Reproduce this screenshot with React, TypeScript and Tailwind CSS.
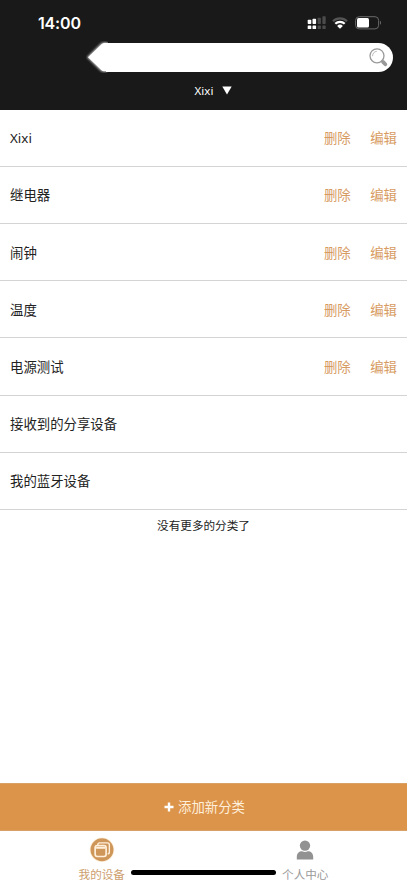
const categories = [
  { name: "Xixi", editable: true },
  { name: "继电器", editable: true },
  { name: "闹钟", editable: true },
  { name: "温度", editable: true },
  { name: "电源测试", editable: true },
  { name: "接收到的分享设备", editable: false },
  { name: "我的蓝牙设备", editable: false },
];

function SignalIcon() {
  return (
    <svg width="20" height="14" viewBox="0 0 20 14" fill="#fff">
      <rect x="0.7" y="3.8" width="3.6" height="4.2" rx="0.7" />
      <rect x="5.5" y="2.7" width="3.6" height="5.3" rx="0.7" />
      <rect x="0.7" y="9.4" width="3.6" height="3.7" rx="0.7" />
      <rect x="5.5" y="9.4" width="3.6" height="3.7" rx="0.7" />
      <g fill="#4b4b4b">
        <rect x="10.6" y="1.7" width="3.3" height="6.3" rx="0.7" />
        <rect x="15.4" y="0.2" width="3.3" height="7.8" rx="0.7" />
        <rect x="10.6" y="9.4" width="3.3" height="3.7" rx="0.7" />
        <rect x="15.4" y="9.4" width="3.3" height="3.7" rx="0.7" />
      </g>
    </svg>
  );
}

function WifiIcon() {
  return (
    <svg width="16" height="12" viewBox="0 0 16 12" fill="none" strokeWidth="2.2">
      <path d="M1 4.2a10 10 0 0 1 14 0" stroke="#555" />
      <path d="M3.3 6.8a6.7 6.7 0 0 1 9.4 0" stroke="#fff" />
      <path d="M8 11.7 5.1 8.9a4.1 4.1 0 0 1 5.8 0Z" fill="#fff" />
    </svg>
  );
}

function BatteryIcon() {
  return (
    <svg width="27" height="14" viewBox="0 0 27 14" fill="none">
      <rect x="0.6" y="0.7" width="23" height="12.2" rx="3.6" stroke="#696969" />
      <rect x="2" y="2.1" width="12" height="9.4" rx="1.6" fill="#fff" />
      <path d="M25 4.8c1.2.6 1.2 3.4 0 4Z" fill="#777" />
    </svg>
  );
}

function SearchIcon() {
  return (
    <svg width="19" height="19" viewBox="0 0 19 19" fill="none">
      <circle cx="8" cy="7.8" r="7" stroke="#999" strokeWidth="1.3" />
      <path d="M3.6 8.2a4.5 4.5 0 0 1 4.2-4.9" stroke="#aaa" strokeWidth="0.8" />
      <path d="m12.4 12.6 1.4 1.3" stroke="#999" strokeWidth="1.5" />
      <path d="m14 13.9 2.3 2.4" stroke="#999" strokeWidth="3.8" strokeLinecap="round" />
    </svg>
  );
}

function Header() {
  return (
    <header className="flex h-[109.6px] shrink-0 flex-col bg-[#191919] text-white">
      <div className="flex h-[43px] items-center justify-between pt-[3px] pr-[25.5px] pl-[38px]">
        <span className="font-['Inter'] text-[16px] font-semibold tracking-[-0.15px]">14:00</span>
        <div className="flex items-center">
          <SignalIcon />
          <span className="ml-[5px]"><WifiIcon /></span>
          <span className="ml-[6.5px]"><BatteryIcon /></span>
        </div>
      </div>
      <div className="flex h-[28.6px] pr-[14.5px] pl-[86px]">
        <svg width="22" height="32" viewBox="0 0 22 32" className="-mt-[1.7px] -mr-[2px] shrink-0">
          <defs>
            <filter id="tip-soften" x="-20%" y="-20%" width="140%" height="140%">
              <feGaussianBlur stdDeviation="0.9" />
            </filter>
          </defs>
          <path d="M0.8 16.2 14.8 2.4Q17 .9 21 1.2V30.8Q17 31.3 14.8 30Z" fill="#bbb" filter="url(#tip-soften)" />
          <path d="M2 16.2 15.8 2.9Q17 1.7 22 1.7V30.3Q17 30.3 15.8 29.4Z" fill="#fff" />
        </svg>
        <div className="flex flex-1 items-center justify-end rounded-r-full bg-white pr-[4.5px]">
          <SearchIcon />
        </div>
      </div>
      <div className="flex flex-1 items-center justify-center gap-[9px] pl-[20px]">
        <span className="font-['Noto_Sans'] text-[11.5px]">Xixi</span>
        <svg width="10" height="9" viewBox="0 0 10 9" fill="#fff"><path d="M.3 .6h9.4L5 8.5Z" /></svg>
      </div>
    </header>
  );
}

function DevicesIcon() {
  return (
    <svg width="26" height="26" viewBox="0 0 26 26" fill="none">
      <circle cx="13" cy="13" r="12.6" fill="#fdf0dc" />
      <circle cx="13" cy="13" r="11.7" fill="#cf965a" />
      <path d="M8.7 8.5V8q0-2 2-2h7.6q2.2 0 2.2 2.2v7q0 2-1.8 2" stroke="#fff0dc" strokeWidth="1.4" />
      <rect x="6" y="8.7" width="11.2" height="11.2" rx="2.2" stroke="#fff0dc" strokeWidth="1.7" />
      <path d="M7 10.9h9.4" stroke="#fff0dc" strokeWidth="2.2" />
    </svg>
  );
}

function PersonIcon() {
  return (
    <svg width="18" height="21" viewBox="0 0 18 21" fill="#929292">
      <circle cx="9" cy="5.7" r="5.3" />
      <path d="M.6 20v-2.5c0-4.1 2.5-6 5.4-6q3 1.4 6 0c2.9 0 5.4 1.9 5.4 6V20Z" />
    </svg>
  );
}

export default function App() {
  return (
    <div className="flex h-[883px] w-[407px] flex-col overflow-hidden bg-white font-['Noto_Sans','Noto_Sans_CJK_SC',sans-serif]">
      <Header />
      <main className="min-h-0 flex-1">
        <ul>
          {categories.map((category) => (
            <li
              key={category.name}
              className="flex h-[57.2px] items-center justify-between border-b border-[#d4d4d4] px-[10px] pt-[1px] text-[13.4px] text-[#222]"
            >
              <span>{category.name}</span>
              {category.editable && (
                <span className="flex gap-[19.5px] text-[#d79b62]">
                  <button>删除</button>
                  <button>编辑</button>
                </span>
              )}
            </li>
          ))}
        </ul>
        <p className="pt-[7px] text-center text-[11.6px] leading-[18px] text-[#222]">没有更多的分类了</p>
      </main>
      <button className="flex h-[48px] shrink-0 items-center justify-center gap-[4px] border-y border-[#d8a166] bg-[#dc934a] pl-[2px] text-[13.4px] text-[#fff0dc]">
        <svg width="10" height="10" viewBox="0 0 10 10" stroke="#fff" strokeWidth="2.4">
          <path d="M.5 5h9M5 .5v9" />
        </svg>
        <span className="pt-[1px]">添加新分类</span>
      </button>
      <nav className="relative flex h-[52.5px] shrink-0 bg-white text-[11.6px] leading-[17px]">
        <div className="flex flex-1 flex-col items-center pt-[6px] text-[#cda06f]">
          <DevicesIcon />
          <span className="mt-[4px]">我的设备</span>
        </div>
        <div className="flex flex-1 flex-col items-center pt-[9px] text-[#999]">
          <PersonIcon />
          <span className="mt-[6px]">个人中心</span>
        </div>
        <div className="absolute top-[39.5px] left-[131px] h-[5px] w-[145px] rounded-full bg-black" />
      </nav>
    </div>
  );
}
